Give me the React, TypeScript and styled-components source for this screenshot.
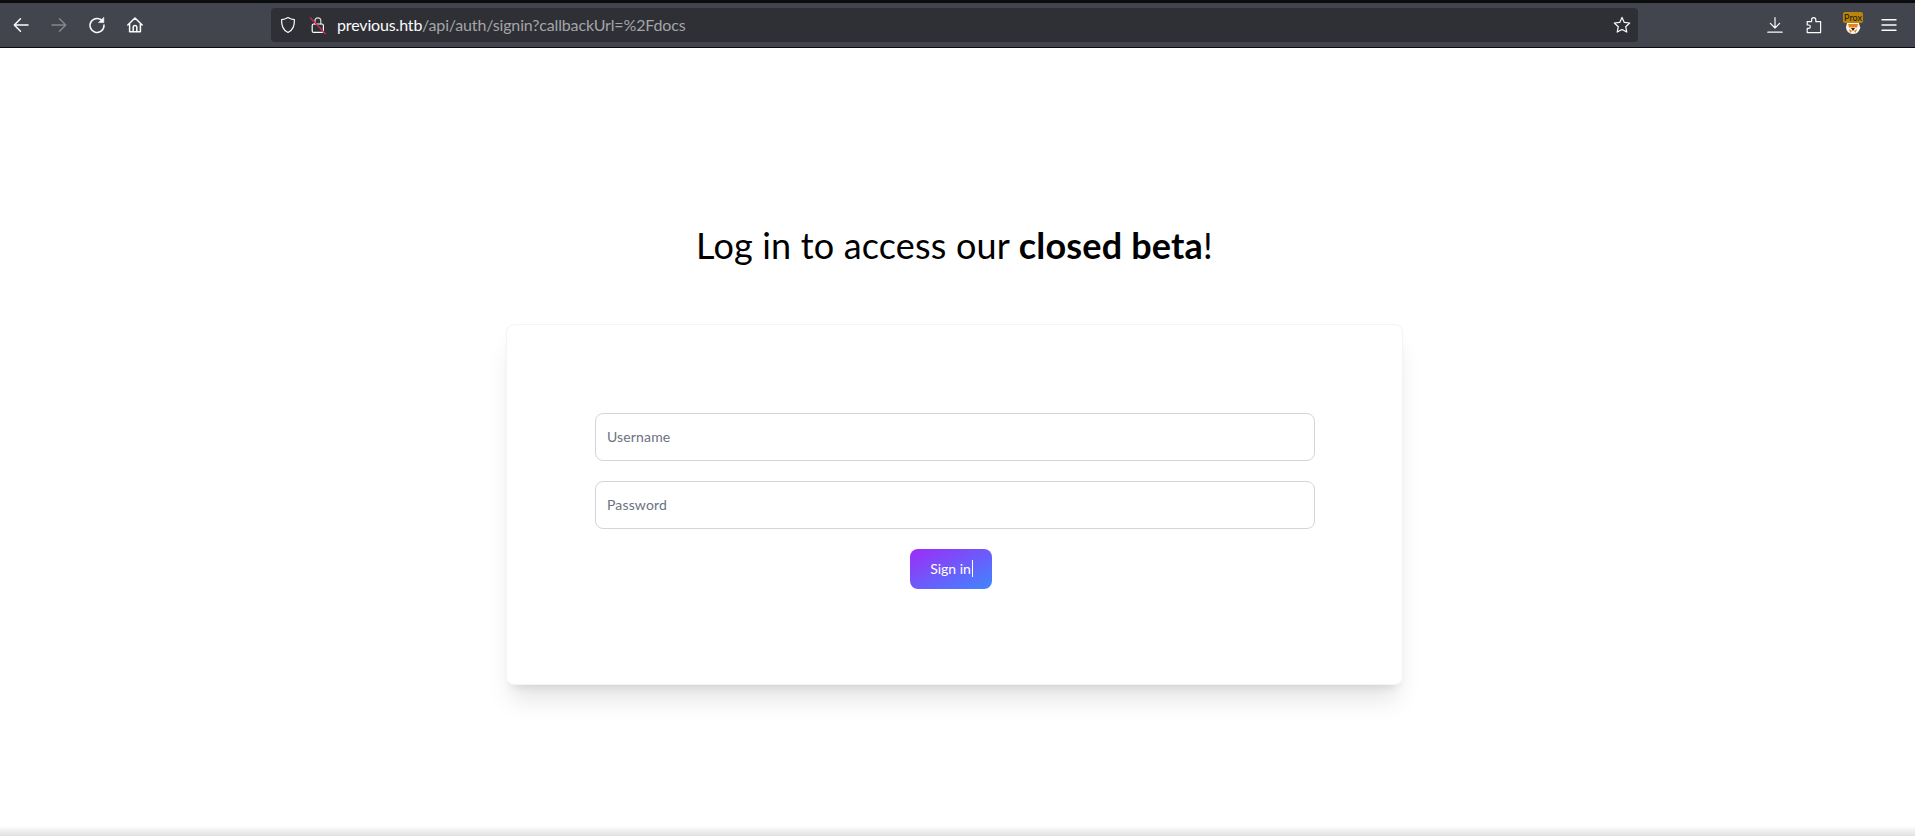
import React from 'react'
import styled, { createGlobalStyle } from 'styled-components'

const GlobalStyle = createGlobalStyle`
  html, body {
    margin: 0;
    padding: 0;
    height: 100%;
    overflow: hidden;
    background: #fff;
    font-family: "Lato", sans-serif;
  }
  * { box-sizing: border-box; }
`

function Glyph({ children, size = 20 }: { children: React.ReactNode; size?: number }) {
  return (
    <svg width={size} height={size} viewBox="0 0 20 20" fill="none" stroke="currentColor" strokeWidth="1.5" strokeLinecap="round" strokeLinejoin="round">
      {children}
    </svg>
  )
}

export default function App() {
  return (
    <Page>
      <GlobalStyle />
      <TopStrip />
      <Toolbar>
        <NavGroup>
          <NavButton>
            <Glyph><path d="M17 10H3.500M9.500 3.800 3.300 10l6.200 6.200" /></Glyph>
          </NavButton>
          <NavButton $disabled>
            <Glyph><path d="M3 10h13.500M10.500 3.800l6.200 6.200-6.200 6.200" /></Glyph>
          </NavButton>
          <NavButton>
            <Glyph>
              <path d="M15.600 6.200A7 7 0 1 0 17 10" />
              <path d="M16.800 2.600v5h-5z" fill="currentColor" strokeWidth="0.6" />
            </Glyph>
          </NavButton>
          <NavButton>
            <Glyph>
              <path d="M2.800 10 10 3l7.200 7M4.600 8.600v8.200h10.800V8.600" />
              <path d="M8.200 16.600v-4.400a1.800 1.800 0 0 1 3.600 0v4.400" />
            </Glyph>
          </NavButton>
        </NavGroup>
        <UrlBar>
          <UrlIcon>
            <Glyph><path d="M10 2.600c2.400 1.500 4.300 2 6.400 2.100.3 6.600-1.600 10.600-6.400 12.800C5.200 15.300 3.300 11.300 3.600 4.700 5.700 4.600 7.600 4.100 10 2.600Z" strokeWidth="1.2" /></Glyph>
          </UrlIcon>
          <LockIcon>
            <Glyph>
              <path d="M7 9V5.800a2.900 2.900 0 0 1 5.800 0V9" strokeWidth="1.200" stroke="#d8d8da" />
              <rect x="4.200" y="9" width="11.200" height="8.400" rx="1.500" strokeWidth="1.200" stroke="#fbfbfe" />
              <path d="M2.500 3 17.200 18.500" stroke="#d7264f" strokeWidth="1.200" />
            </Glyph>
          </LockIcon>
          <UrlText>
            previous.htb<UrlPath>/api/auth/signin?callbackUrl=%2Fdocs</UrlPath>
          </UrlText>
          <StarIcon>
            <Glyph><path d="m10 2.400 2.300 5 5.400.6-4 3.700 1.100 5.400-4.800-2.700-4.800 2.700 1.100-5.400-4-3.700 5.400-.6z" strokeWidth="1.200" /></Glyph>
          </StarIcon>
        </UrlBar>
        <ActionGroup>
          <ActionButton>
            <Glyph>
              <path d="M10 2.600v10M5.400 8.400 10 13l4.600-4.600M2.800 17.200h14.400" strokeWidth="1.200" />
            </Glyph>
          </ActionButton>
          <ActionButton>
            <Glyph>
              <path d="M3.200 17.600v-4.200h1.400a1.700 1.700 0 0 0 0-3.400H3.200V6.600h4.400V4.800a2.100 2.100 0 0 1 4.200 0v1.800h4.800v11z" strokeWidth="1.200" />
            </Glyph>
          </ActionButton>
          <ActionButton>
            <FoxyIcon>
              <svg width="18" height="14" viewBox="0 0 18 14">
                <path d="M3 1h12l1 4c0 4-3 7-7 7s-7-3-7-7z" fill="#f7f1e8" />
                <path d="M4 2h10l-1 3.500H5zM5 7l3 2-2 2zM13 7l-3 2 2 2z" fill="#e8801e" />
                <path d="M7 6h4l-2 3z" fill="#2c2018" />
                <path d="M12 11l4-6" stroke="#fff" strokeWidth="1.300" />
              </svg>
            </FoxyIcon>
            <ProxyBadge>Prox</ProxyBadge>
          </ActionButton>
          <MenuButton>
            <Glyph><path d="M3 4.800h14M3 10h14M3 15.200h14" strokeWidth="1.400" /></Glyph>
          </MenuButton>
        </ActionGroup>
      </Toolbar>
      <Main>
        <Heading>
          Log in to access our <strong>closed beta</strong>!
        </Heading>
        <Card>
          <Field placeholder="Username" readOnly />
          <Field placeholder="Password" readOnly />
          <ButtonRow>
            <SignIn>
              Sign in
              <Caret />
            </SignIn>
          </ButtonRow>
        </Card>
      </Main>
      <BottomFade />
    </Page>
  )
}

const Page = styled.div`
  position: relative;
  width: 1915px;
  height: 836px;
  overflow: hidden;
  background: #fff;
`

const TopStrip = styled.div`
  height: 3px;
  background: #0c0c0f;
`

const Toolbar = styled.header`
  display: flex;
  align-items: center;
  height: 45px;
  background: #42454d;
  border-bottom: 1px solid #0c0c0f;
  color: #fbfbfe;
`

const NavGroup = styled.nav`
  display: flex;
  align-items: center;
  gap: 18px;
  padding-left: 11px;
  width: 271px;
`

const NavButton = styled.button<{ $disabled?: boolean }>`
  display: flex;
  width: 20px;
  height: 20px;
  padding: 0;
  border: none;
  background: transparent;
  color: ${(p) => (p.$disabled ? '#84868b' : '#fbfbfe')};
`

const UrlBar = styled.div`
  display: flex;
  align-items: center;
  width: 1367px;
  height: 34px;
  margin-top: -1px;
  padding: 0 6px 0 7px;
  border-radius: 4px;
  background: #2f3035;
`

const UrlIcon = styled.span`
  display: flex;
  margin-right: 10px;
`

const LockIcon = styled.span`
  display: flex;
  margin-right: 9px;
`

const UrlText = styled.span`
  flex: 1;
  font-size: 16px;
  letter-spacing: -0.15px;
  color: #fbfbfe;
  white-space: nowrap;
`

const UrlPath = styled.span`
  color: #a4a5a9;
`

const StarIcon = styled.span`
  display: flex;
`

const ActionGroup = styled.div`
  display: flex;
  align-items: center;
  gap: 19px;
  padding-left: 127px;
`

const ActionButton = styled.span`
  position: relative;
  display: flex;
  width: 20px;
  height: 20px;
`

const MenuButton = styled(ActionButton)`
  margin-left: -3px;
`

const FoxyIcon = styled.span`
  position: absolute;
  top: 7px;
  left: 1px;
  display: flex;
`

const ProxyBadge = styled.span`
  position: absolute;
  top: -3px;
  left: 0;
  width: 20px;
  height: 11px;
  border-radius: 2px;
  background: #b8860b;
  color: #1a1408;
  font-size: 9px;
  line-height: 11px;
  text-align: center;
  white-space: nowrap;
`

const Main = styled.main`
  display: flex;
  flex-direction: column;
  align-items: center;
  padding: 169px 6px 0 0;
`

const Heading = styled.h1`
  margin: 0 0 51px;
  font-size: 36px;
  font-weight: 400;
  letter-spacing: 0.18px;
  line-height: 56px;
  color: #000;
  strong { font-weight: 700; }
`

const Card = styled.section`
  display: flex;
  flex-direction: column;
  gap: 20px;
  width: 897px;
  height: 361px;
  padding: 88px 88px 0;
  border: 1px solid #f3f4f6;
  border-radius: 8px;
  background: #fff;
  box-shadow: 0 20px 25px -5px rgba(0, 0, 0, 0.1), 0 8px 10px -6px rgba(0, 0, 0, 0.1);
`

const Field = styled.input`
  width: 720px;
  height: 48px;
  padding: 0 11px 2px;
  border: 1px solid #d1d5dc;
  border-radius: 8px;
  outline: none;
  background: #fff;
  font-family: "Lato", sans-serif;
  font-size: 14px;
  letter-spacing: 0.15px;
  &::placeholder { color: #6a7282; opacity: 1; }
`

const ButtonRow = styled.div`
  display: flex;
  justify-content: center;
  padding-right: 8px;
`

const SignIn = styled.button`
  display: flex;
  align-items: center;
  justify-content: center;
  width: 82px;
  height: 40px;
  padding: 0 0 2px 2px;
  border: none;
  border-radius: 8px;
  background: linear-gradient(to bottom right, #9d2cf6, #3f87ff);
  color: #fff;
  font-family: "Lato", sans-serif;
  font-size: 14px;
`

const Caret = styled.span`
  width: 1px;
  height: 17px;
  margin-left: 1px;
  background: #fff;
`

const BottomFade = styled.div`
  position: absolute;
  left: 0;
  right: 0;
  bottom: 0;
  height: 10px;
  background: linear-gradient(to bottom, rgba(0, 0, 0, 0), rgba(0, 0, 0, 0.12));
`
